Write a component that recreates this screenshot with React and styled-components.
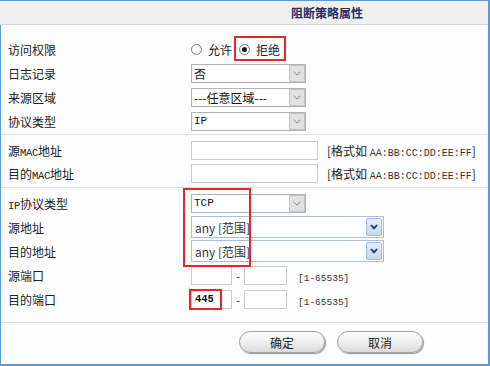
import React from "react";
import styled, { createGlobalStyle } from "styled-components";

const Global = createGlobalStyle`
  html, body { margin: 0; padding: 0; background: #ffffff; }
  body { font-family: "Noto Sans CJK SC", "Liberation Sans", sans-serif; font-size: 12px; color: #222; }
`;

const Frame = styled.div`
  width: 490px;
  height: 366px;
  box-sizing: border-box;
  border-top: 1px solid #5b9bd5;
  border-right: 2px solid #5b9bd5;
  border-bottom: 2px solid #5b9bd5;
  display: flex;
  flex-direction: column;
  background: #fdfdfd;
`;

const Header = styled.div`
  height: 23px;
  background: #efefef;
  border-bottom: 1px solid #d4d4d4;
  display: flex;
  align-items: center;
  justify-content: center;
  padding-left: 166px;
`;

const Title = styled.span`
  font-weight: bold;
  font-size: 12px;
  color: #2a2a5e;
`;

const Body = styled.div`
  flex: 1;
  border-left: 1px solid #5b9bd5;
  display: flex;
  flex-direction: column;
`;

const Section = styled.div`
  position: relative;
  padding: ${(p) => p.$pad};
  border-bottom: 1px solid #dedede;
`;

const Row = styled.div`
  display: grid;
  grid-template-columns: 190px 1fr;
  align-items: center;
  height: ${(p) => p.$h || 24}px;
`;

const Label = styled.div`
  padding-left: 7px;
  font-size: 12px;
  color: #222;
  white-space: nowrap;
`;

const Small = styled.span`
  font-family: "Liberation Mono", monospace;
  font-size: 10.5px;
  letter-spacing: -0.3px;
`;

const Cell = styled.div`
  display: flex;
  align-items: center;
`;

const RadioOpt = styled.label`
  position: relative;
  display: inline-flex;
  align-items: center;
  gap: 6px;
  line-height: 17px;
  margin-right: ${(p) => p.$mr || 0}px;
  ${(p) =>
    p.$marked &&
    `&::after {
      content: "";
      position: absolute;
      left: -5px; right: -6px; top: -5px; bottom: -3px;
      border: 2px solid #e8262a;
    }`}
`;

const RadioDot = styled.span`
  width: 9px;
  height: 9px;
  border-radius: 50%;
  border: 1px solid #7d7d7d;
  background: radial-gradient(circle, #ffffff 40%, #ececec);
  display: inline-flex;
  align-items: center;
  justify-content: center;
  &::before {
    content: "";
    width: 5px;
    height: 5px;
    border-radius: 50%;
    background: ${(p) => (p.$checked ? "#1a1a1a" : "transparent")};
  }
`;

const SelectBox = styled.div`
  width: 115px;
  height: 19px;
  box-sizing: border-box;
  border: 1px solid #b3b3b3;
  background: #fff;
  display: flex;
  align-items: center;
`;

const SelectText = styled.span`
  flex: 1;
  padding-left: 2px;
  font-family: ${(p) => (p.$mono ? `"Liberation Mono", monospace` : `"Noto Sans CJK SC", sans-serif`)};
  font-size: ${(p) => (p.$mono ? "11px" : "12px")};
  color: #111;
  white-space: nowrap;
  overflow: hidden;
`;

const Arrow = styled.span`
  width: 16px;
  height: 17px;
  box-sizing: border-box;
  border: 1px solid #c4c4c4;
  background: #e2e2e2;
  display: flex;
  align-items: center;
  justify-content: center;
`;

const WinSelect = styled.div`
  width: 193px;
  height: 22px;
  box-sizing: border-box;
  border: 1px solid #a7bfdc;
  background: #fff;
  display: flex;
  align-items: center;
`;

const WinText = styled.span`
  flex: 1;
  padding-left: 3px;
  font-family: "Noto Sans CJK SC", "Open Sans", sans-serif;
  font-size: 12px;
  color: #333;
`;

const WinArrow = styled.span`
  width: 16px;
  height: 18px;
  margin-right: 1px;
  box-sizing: border-box;
  border: 1px solid #9dbbe3;
  border-radius: 2px;
  background: linear-gradient(#e3eefc, #c2d8f3);
  display: flex;
  align-items: center;
  justify-content: center;
`;

const TextInput = styled.div`
  position: relative;
  width: ${(p) => p.$w}px;
  height: 19px;
  box-sizing: border-box;
  border: 1px solid #cacaca;
  background: #fff;
  display: flex;
  align-items: center;
  padding-left: 3px;
  font-family: "Liberation Mono", monospace;
  font-size: 10.5px;
  font-weight: bold;
  color: #111;
  ${(p) =>
    p.$marked &&
    `&::after {
      content: "";
      position: absolute;
      left: -3px; top: -2px; width: 29px; height: 17px;
      border: 2px solid #e8262a;
    }`}
`;

const Dash = styled.span`
  width: 12px;
  text-align: center;
  color: #333;
  font-size: 12px;
`;

const Hint = styled.span`
  margin-left: ${(p) => p.$ml}px;
  color: #222;
  font-size: 12px;
  white-space: nowrap;
`;

const HintMono = styled.span`
  font-family: "Liberation Mono", monospace;
  font-size: ${(p) => p.$fs || 9.5}px;
  color: #333;
`;

const GroupMark = styled.div`
  position: absolute;
  left: 182px;
  top: 0px;
  width: 64px;
  height: 75px;
  border: 2px solid #e8262a;
  pointer-events: none;
`;

const Actions = styled.div`
  flex: 1;
  display: flex;
  gap: 12px;
  padding: 8px 0 0 238px;
`;

const Button = styled.div`
  width: 86px;
  height: 22px;
  box-sizing: border-box;
  border: 1px solid #a3a3a3;
  border-radius: 11px;
  background: linear-gradient(#ffffff 0%, #f1f1f1 45%, #dcdcdc 100%);
  box-shadow: 1px 1px 1px #9a9a9a;
  display: flex;
  align-items: center;
  justify-content: center;
  font-size: 12px;
  color: #222;
`;

const Chevron = () => (
  <svg width="8" height="5" viewBox="0 0 8 5">
    <path d="M0.5 0.8 L4 4 L7.5 0.8" fill="none" stroke="#8a8a8a" strokeWidth="1" />
  </svg>
);

const WinChevron = () => (
  <svg width="8" height="6" viewBox="0 0 8 6">
    <path d="M1 1.2 L4 4.4 L7 1.2" fill="none" stroke="#1f3766" strokeWidth="1.8" />
  </svg>
);

const Select = ({ children, mono }) => (
  <SelectBox>
    <SelectText $mono={mono}>{children}</SelectText>
    <Arrow>
      <Chevron />
    </Arrow>
  </SelectBox>
);

const Combo = ({ children }) => (
  <WinSelect>
    <WinText>{children}</WinText>
    <WinArrow>
      <WinChevron />
    </WinArrow>
  </WinSelect>
);

export default function App() {
  return (
    <>
      <Global />
      <Frame>
        <Header>
          <Title>阻断策略属性</Title>
        </Header>
        <Body>
          <Section $pad="12px 0 1px">
            <Row>
              <Label>访问权限</Label>
              <Cell>
                <RadioOpt $mr={7}>
                  <RadioDot />
                  允许
                </RadioOpt>
                <RadioOpt $marked>
                  <RadioDot $checked />
                  拒绝
                </RadioOpt>
              </Cell>
            </Row>
            <Row>
              <Label>日志记录</Label>
              <Cell>
                <Select>否</Select>
              </Cell>
            </Row>
            <Row>
              <Label>来源区域</Label>
              <Cell>
                <Select>---任意区域---</Select>
              </Cell>
            </Row>
            <Row>
              <Label>协议类型</Label>
              <Cell>
                <Select mono>IP</Select>
              </Cell>
            </Row>
          </Section>
          <Section $pad="4px 0 2px">
            <Row $h={23}>
              <Label>
                源<Small>MAC</Small>地址
              </Label>
              <Cell>
                <TextInput $w={127} />
                <Hint $ml={9}>
                  [格式如 <HintMono $fs={10}>AA:BB:CC:DD:EE:FF</HintMono>]
                </Hint>
              </Cell>
            </Row>
            <Row $h={23}>
              <Label>
                目的<Small>MAC</Small>地址
              </Label>
              <Cell>
                <TextInput $w={127} />
                <Hint $ml={9}>
                  [格式如 <HintMono $fs={10}>AA:BB:CC:DD:EE:FF</HintMono>]
                </Hint>
              </Cell>
            </Row>
          </Section>
          <Section $pad="3px 0 11px">
            <Row>
              <Label>
                <Small>IP</Small>协议类型
              </Label>
              <Cell>
                <Select mono>TCP</Select>
              </Cell>
            </Row>
            <Row>
              <Label>源地址</Label>
              <Cell>
                <Combo>any [范围]</Combo>
              </Cell>
            </Row>
            <Row>
              <Label>目的地址</Label>
              <Cell>
                <Combo>any [范围]</Combo>
              </Cell>
            </Row>
            <Row>
              <Label>源端口</Label>
              <Cell>
                <TextInput $w={41} />
                <Dash>-</Dash>
                <TextInput $w={43} />
                <Hint $ml={11}>
                  <HintMono>[1-65535]</HintMono>
                </Hint>
              </Cell>
            </Row>
            <Row>
              <Label>目的端口</Label>
              <Cell>
                <TextInput $w={41} $marked>
                  445
                </TextInput>
                <Dash>-</Dash>
                <TextInput $w={43} />
                <Hint $ml={11}>
                  <HintMono>[1-65535]</HintMono>
                </Hint>
              </Cell>
            </Row>
            <GroupMark />
          </Section>
          <Actions>
            <Button>确定</Button>
            <Button>取消</Button>
          </Actions>
        </Body>
      </Frame>
    </>
  );
}
